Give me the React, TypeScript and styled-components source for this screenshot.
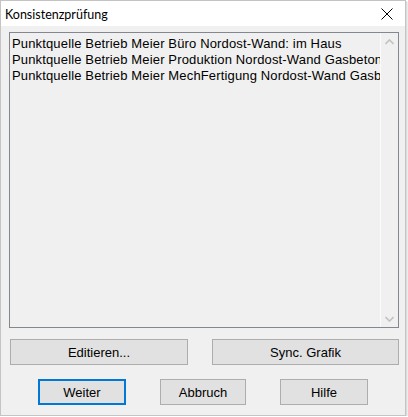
import React from "react";
import styled, { createGlobalStyle } from "styled-components";

const GlobalStyle = createGlobalStyle`
  html, body {
    margin: 0;
    padding: 0;
    background: #ffffff;
  }

  body {
    font-family: "Liberation Sans", Arial, sans-serif;
  }
`;

const DialogWindow = styled.div`
  width: 406px;
  height: 416px;
  box-sizing: border-box;
  border: 1px solid #c4c4c4;
  box-shadow: 1px 1px 0 #dcdcdc, 2px 2px 0 #ececec;
  background: #f0f0f0;
  display: flex;
  flex-direction: column;
`;

const TitleBar = styled.div`
  height: 25px;
  flex: none;
  background: #ffffff;
  display: flex;
  align-items: center;
  justify-content: space-between;
  padding: 0 11px 0 4px;
`;

const Title = styled.span`
  font-family: Lato, "Noto Sans", sans-serif;
  font-size: 12.5px;
  color: #000000;
  padding-top: 1px;
`;

const CloseButton = styled.button`
  width: 14px;
  height: 14px;
  padding: 0;
  border: 0;
  background: transparent;
  display: flex;
  align-items: center;
  justify-content: center;
`;

const Body = styled.div`
  flex: 1;
  display: flex;
  flex-direction: column;
  padding: 6px 6px 0 8px;
`;

const ListBox = styled.div`
  height: 296px;
  box-sizing: border-box;
  border: 1px solid #828790;
  background: #f0f0f0;
  display: flex;
`;

const ListItems = styled.ul`
  flex: 1;
  margin: 0;
  padding: 3px 0 0 2px;
  list-style: none;
  overflow: hidden;
`;

const ListItem = styled.li`
  font-size: 13px;
  letter-spacing: 0.15px;
  line-height: 16px;
  color: #000000;
  white-space: nowrap;
`;

const ScrollBar = styled.div`
  width: 17px;
  flex: none;
  border-left: 1px solid #fbfbfb;
  display: flex;
  flex-direction: column;
  justify-content: space-between;
  align-items: center;
  padding: 6px 0 5px;
`;

const ButtonRow = styled.div<{ $gap: number; $inset: number; $top: number }>`
  display: flex;
  gap: ${(p) => p.$gap}px;
  padding-left: ${(p) => p.$inset}px;
  margin-top: ${(p) => p.$top}px;
`;

const DialogButton = styled.button<{ $width: number; $default?: boolean }>`
  width: ${(p) => p.$width}px;
  height: 26px;
  box-sizing: border-box;
  background: #e1e1e1;
  border: ${(p) => (p.$default ? "2px solid #0078d7" : "1px solid #adadad")};
  font-family: "Liberation Sans", Arial, sans-serif;
  font-size: 13px;
  color: #000000;
  padding: 0;
`;

const Chevron: React.FC<{ down?: boolean }> = ({ down }) => (
  <svg width="9" height="6" viewBox="0 0 9 6">
    <path
      d={down ? "M0.5 1 L4.5 5 L8.5 1" : "M0.5 5 L4.5 1 L8.5 5"}
      fill="none"
      stroke="#c2c2c2"
      strokeWidth="1.6"
    />
  </svg>
);

const entries = [
  "Punktquelle Betrieb Meier Büro Nordost-Wand: im Haus",
  "Punktquelle Betrieb Meier Produktion Nordost-Wand Gasbeton",
  "Punktquelle Betrieb Meier MechFertigung Nordost-Wand Gasbeton",
];

const App: React.FC = () => {
  return (
    <>
      <GlobalStyle />
      <DialogWindow>
        <TitleBar>
          <Title>Konsistenzprüfung</Title>
          <CloseButton aria-label="Schließen">
            <svg width="12" height="12" viewBox="0 0 12 12">
              <path d="M0.5 0.5 L11.5 11.5 M11.5 0.5 L0.5 11.5" stroke="#000" strokeWidth="1" />
            </svg>
          </CloseButton>
        </TitleBar>

        <Body>
          <ListBox>
            <ListItems>
              {entries.map((e) => (
                <ListItem key={e}>{e}</ListItem>
              ))}
            </ListItems>
            <ScrollBar>
              <Chevron />
              <Chevron down />
            </ScrollBar>
          </ListBox>

          <ButtonRow $gap={24} $inset={1} $top={11}>
            <DialogButton $width={178}>Editieren...</DialogButton>
            <DialogButton $width={187}>Sync. Grafik</DialogButton>
          </ButtonRow>

          <ButtonRow $gap={34} $inset={29} $top={14}>
            <DialogButton $width={88} $default>
              Weiter
            </DialogButton>
            <DialogButton $width={86}>Abbruch</DialogButton>
            <DialogButton $width={88}>Hilfe</DialogButton>
          </ButtonRow>
        </Body>
      </DialogWindow>
    </>
  );
};

export default App;
